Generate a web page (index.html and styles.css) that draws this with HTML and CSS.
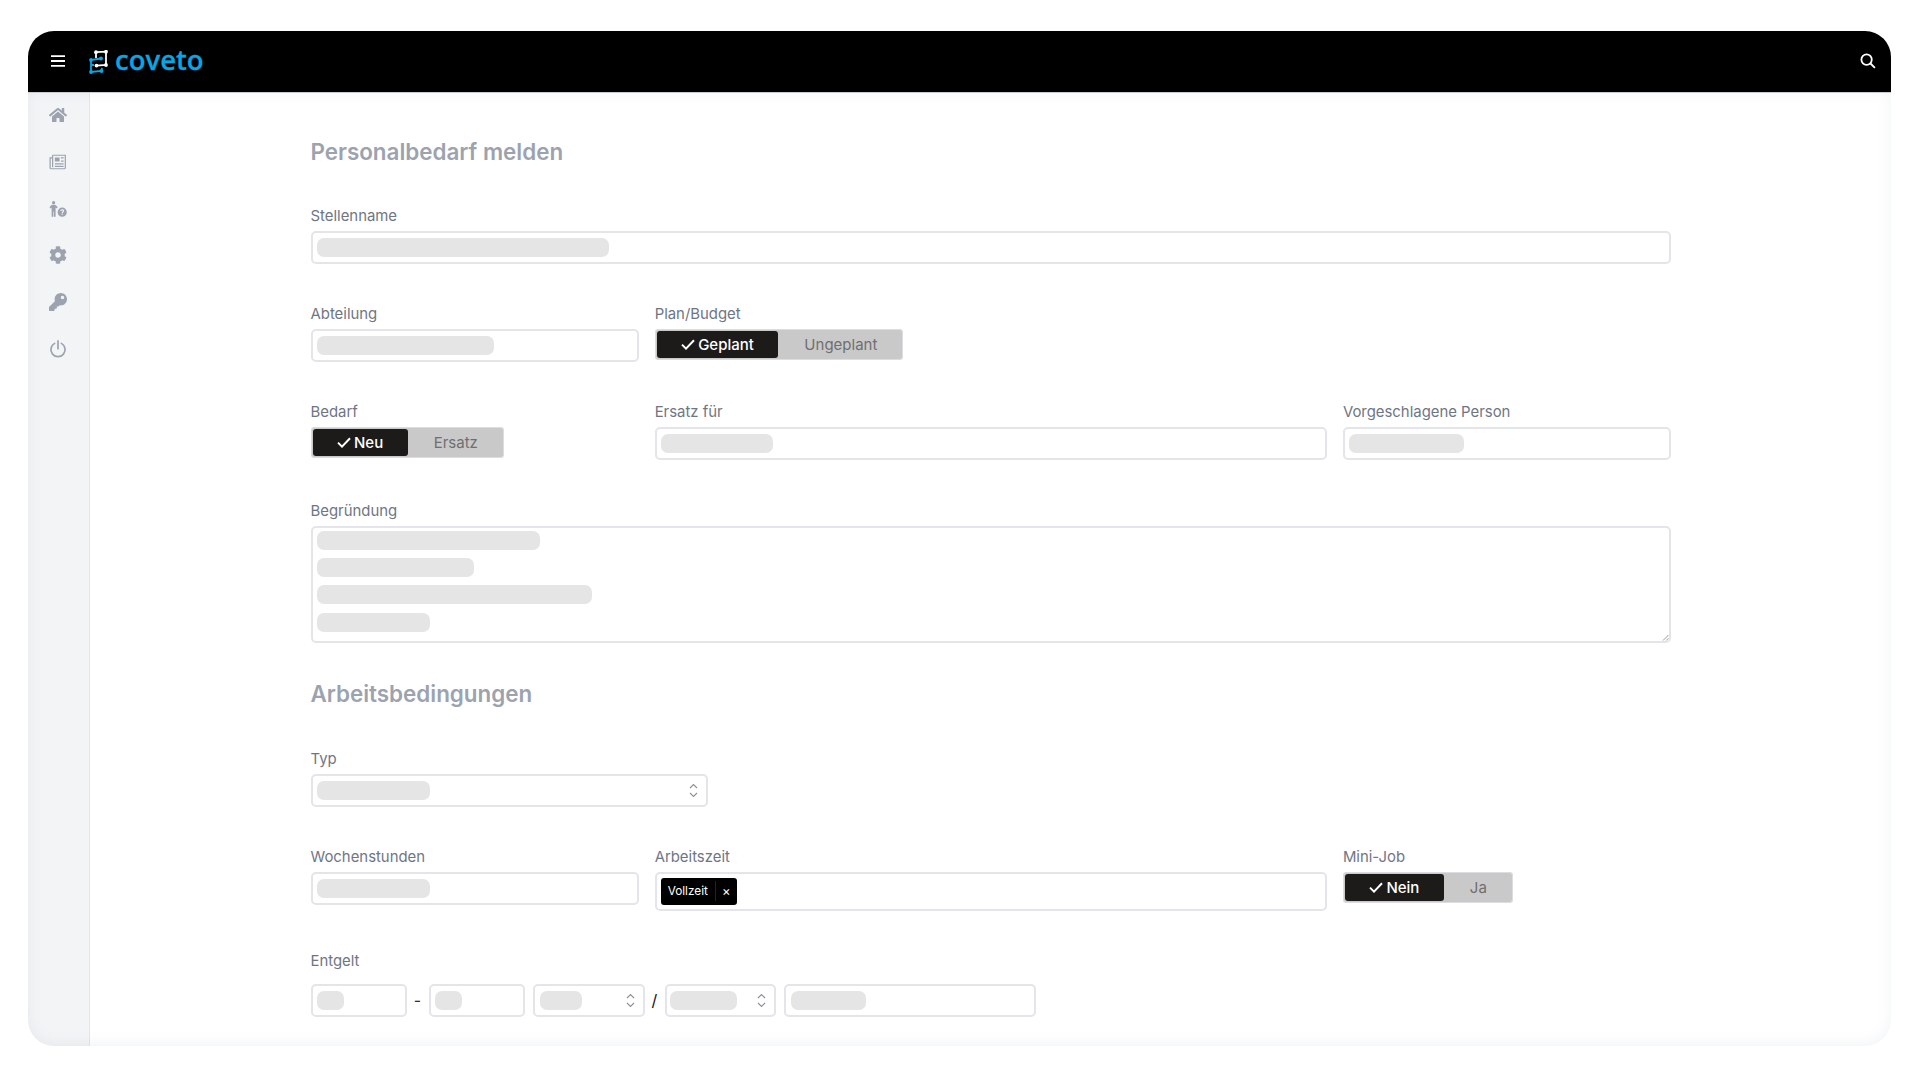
FILE: index.html
```html
<!DOCTYPE html>
<html lang="de">
<head>
    <meta charset="UTF-8">
    <meta name="viewport" content="width=device-width, initial-scale=1.0">
    <title>Personalbedarf melden</title>
    <link rel="stylesheet" href="styles.css">
</head>
<body>

<div class="window">
    <header class="topbar">
        <svg class="bars" viewBox="0 0 14 12"><path d="M0 1.2h14M0 6h14M0 10.8h14"/></svg>
        <div class="brand">
            <svg class="brand-icon" viewBox="0 0 21 24">
                <g class="brand-white">
                    <path d="M7 2.2L17 1.6V15L7.5 15.6M7 2.2V8"/>
                    <circle cx="7" cy="2.2" r="1.9"/><circle cx="17" cy="1.8" r="1.9"/><circle cx="17" cy="15" r="1.9"/><circle cx="7.5" cy="15.6" r="1.9"/>
                </g>
                <g class="brand-blue">
                    <path d="M12 8.5L2 10V22L12.5 21L13 18M2 15h3"/>
                    <circle cx="12" cy="8.5" r="1.9"/><circle cx="2" cy="10" r="1.9"/><circle cx="2" cy="22" r="1.9"/><circle cx="12.5" cy="21" r="1.9"/>
                </g>
            </svg>
            <span class="brand-name">coveto</span>
        </div>
        <svg class="search" viewBox="0 0 16 16"><circle cx="6.6" cy="6.6" r="5.2"/><path d="M10.5 10.5l4.4 4.4"/></svg>
    </header>

    <div class="layout">
        <nav class="sidebar">
            <svg class="nav-icon" viewBox="0 0 576 512"><path d="M280.37 148.26L96 300.11V464a16 16 0 0 0 16 16l112.06-.29a16 16 0 0 0 15.92-16V368a16 16 0 0 1 16-16h64a16 16 0 0 1 16 16v95.64a16 16 0 0 0 16 16.05L464 480a16 16 0 0 0 16-16V300L295.67 148.26a12.19 12.19 0 0 0-15.3 0zM571.6 251.47L488 182.56V44.05a12 12 0 0 0-12-12h-56a12 12 0 0 0-12 12v72.61L318.47 43a48 48 0 0 0-61 0L4.34 251.47a12 12 0 0 0-1.6 16.9l25.5 31A12 12 0 0 0 45.15 301l235.22-193.74a12.19 12.19 0 0 1 15.3 0L530.9 301a12 12 0 0 0 16.9-1.6l25.5-31a12 12 0 0 0-1.7-16.93z"/></svg>
            <svg class="nav-icon nav-line" viewBox="0 0 16 14"><path d="M3.2 1h11.3v11c0 .6-.4 1-1 1H2c-.6 0-1-.4-1-1V3.4h2.2M3.2 1v10.6"/><path class="fill" d="M5.2 3h4.2v3.6H5.2z"/><path d="M10.6 3.4h2.4M10.6 6.2h2.4M5.2 8.6H13M5.2 10.8H13"/></svg>
            <svg class="nav-icon" viewBox="0 0 18 16"><circle cx="4.6" cy="1.7" r="1.6"/><path d="M4.6 3.8c1.5 0 2 .2 2.6.8l1.5 1.7-1.1 1.1-1-1V15.8H4.9v-5H4.3v5H2.6V6.4l-1 1L.5 6.3 2 4.6c.6-.6 1-.8 2.6-.8z"/><path fill-rule="evenodd" d="M13.2 6.6a4.6 4.6 0 1 1 0 9.2 4.6 4.6 0 0 1 0-9.2zm-1.9 3.5h1.2c0-.5.3-.8.7-.8.4 0 .7.2.7.6 0 .7-1.2.8-1.2 2.1h1.2c0-.9 1.3-1 1.3-2.2 0-1-.9-1.6-2-1.6-1.2 0-1.9.8-1.9 1.9zm1.3 2.4v1.2h1.2v-1.2z"/></svg>
            <svg class="nav-icon" viewBox="0 0 512 512"><path d="M487.4 315.7l-42.6-24.6c4.3-23.2 4.3-47 0-70.2l42.6-24.6c4.9-2.8 7.1-8.6 5.5-14-11.1-35.6-30-67.8-54.7-94.6-3.8-4.1-10-5.1-14.8-2.3L380.8 110c-17.9-15.4-38.5-27.3-60.8-35.1V25.8c0-5.6-3.9-10.5-9.4-11.7-36.7-8.2-74.3-7.8-109.2 0-5.5 1.2-9.4 6.1-9.4 11.7V75c-22.2 7.9-42.8 19.8-60.8 35.1L88.7 85.5c-4.9-2.8-11-1.9-14.8 2.3-24.7 26.7-43.6 58.9-54.7 94.6-1.7 5.4.6 11.2 5.5 14L67.3 221c-4.3 23.2-4.3 47 0 70.2l-42.6 24.6c-4.9 2.8-7.1 8.6-5.5 14 11.1 35.6 30 67.8 54.7 94.6 3.8 4.1 10 5.1 14.8 2.3l42.6-24.6c17.9 15.4 38.5 27.3 60.8 35.1v49.2c0 5.6 3.9 10.5 9.4 11.7 36.7 8.2 74.3 7.8 109.2 0 5.5-1.2 9.4-6.1 9.4-11.7v-49.2c22.2-7.9 42.8-19.8 60.8-35.1l42.6 24.6c4.9 2.8 11 1.9 14.8-2.3 24.7-26.7 43.6-58.9 54.7-94.6 1.5-5.5-.7-11.3-5.6-14.1zM256 336c-44.1 0-80-35.9-80-80s35.9-80 80-80 80 35.9 80 80-35.9 80-80 80z"/></svg>
            <svg class="nav-icon" viewBox="0 0 512 512"><path d="M512 176.001C512 273.203 433.202 352 336 352c-11.22 0-22.19-1.062-32.827-3.069l-24.012 27.014A23.999 23.999 0 0 1 261.223 384H224v40c0 13.255-10.745 24-24 24h-40v40c0 13.255-10.745 24-24 24H24c-13.255 0-24-10.745-24-24v-78.059c0-6.365 2.529-12.47 7.029-16.971l161.802-161.802C163.108 213.814 160 195.271 160 176 160 78.798 238.797.001 335.999 0 433.488-.001 512 78.511 512 176.001zM336 128c0 26.51 21.49 48 48 48s48-21.49 48-48-21.49-48-48-48-48 21.49-48 48z"/></svg>
            <svg class="nav-icon nav-line nav-power" viewBox="0 0 16 16"><path d="M5 3a6.3 6.3 0 1 0 6 0M8 .8v7"/></svg>
        </nav>

        <main class="content">
            <h2 class="title">Personalbedarf melden</h2>

            <div class="grid">
                <div class="field span-12">
                    <label>Stellenname</label>
                    <div class="input"><span class="skel s-292"></span></div>
                </div>

                <div class="field span-3">
                    <label>Abteilung</label>
                    <div class="input"><span class="skel s-177"></span></div>
                </div>
                <div class="field span-9">
                    <label>Plan/Budget</label>
                    <div class="toggle">
                        <span class="opt on"><svg class="check" viewBox="0 0 14 11"><path d="M1 5.6l4 4L13 1.2"/></svg>Geplant</span>
                        <span class="opt">Ungeplant</span>
                    </div>
                </div>

                <div class="field span-3">
                    <label>Bedarf</label>
                    <div class="toggle">
                        <span class="opt on"><svg class="check" viewBox="0 0 14 11"><path d="M1 5.6l4 4L13 1.2"/></svg>Neu</span>
                        <span class="opt">Ersatz</span>
                    </div>
                </div>
                <div class="field span-6">
                    <label>Ersatz für</label>
                    <div class="input"><span class="skel s-112"></span></div>
                </div>
                <div class="field span-3">
                    <label>Vorgeschlagene Person</label>
                    <div class="input"><span class="skel s-115"></span></div>
                </div>

                <div class="field span-12">
                    <label>Begründung</label>
                    <div class="input textarea">
                        <span class="skel s-223"></span>
                        <span class="skel s-157"></span>
                        <span class="skel s-275"></span>
                        <span class="skel s-113"></span>
                        <svg class="grip" viewBox="0 0 7 7"><path d="M6.5 1L1 6.5M6.5 4.2L4.2 6.5"/></svg>
                    </div>
                </div>
            </div>

            <h2 class="title title-second">Arbeitsbedingungen</h2>

            <div class="grid">
                <div class="field span-12">
                    <label>Typ</label>
                    <div class="input select select-typ">
                        <span class="skel s-113"></span>
                        <svg class="updown" viewBox="0 0 9 15"><path d="M1 5l3.5-3.5L8 5M1 10l3.5 3.5L8 10"/></svg>
                    </div>
                </div>

                <div class="field span-3">
                    <label>Wochenstunden</label>
                    <div class="input"><span class="skel s-113"></span></div>
                </div>
                <div class="field span-6">
                    <label>Arbeitszeit</label>
                    <div class="input multi">
                        <span class="tag"><span class="tag-text">Vollzeit</span><span class="tag-x">×</span></span>
                    </div>
                </div>
                <div class="field span-3">
                    <label>Mini-Job</label>
                    <div class="toggle">
                        <span class="opt on"><svg class="check" viewBox="0 0 14 11"><path d="M1 5.6l4 4L13 1.2"/></svg>Nein</span>
                        <span class="opt">Ja</span>
                    </div>
                </div>

                <div class="field span-12 field-pay">
                    <label>Entgelt</label>
                    <div class="pay">
                        <div class="input pay-from"><span class="skel s-27"></span></div>
                        <span class="sep">-</span>
                        <div class="input pay-to"><span class="skel s-27"></span></div>
                        <div class="input select pay-cur">
                            <span class="skel s-42"></span>
                            <svg class="updown" viewBox="0 0 9 15"><path d="M1 5l3.5-3.5L8 5M1 10l3.5 3.5L8 10"/></svg>
                        </div>
                        <span class="sep sep-slash">/</span>
                        <div class="input select pay-per">
                            <span class="skel s-67"></span>
                            <svg class="updown" viewBox="0 0 9 15"><path d="M1 5l3.5-3.5L8 5M1 10l3.5 3.5L8 10"/></svg>
                        </div>
                        <div class="input pay-note"><span class="skel s-73"></span></div>
                    </div>
                </div>
            </div>
        </main>
    </div>
</div>

</body>
</html>
```

FILE: styles.css
```css
* {
    box-sizing: border-box;
}
html, body {
    height: 100%;
}
body {
    margin: 0;
    padding: 31px 29px 34px 28px;
    background: #fff;
    font-family: Inter, "Liberation Sans", sans-serif;
    overflow: hidden;
}

/* window */
.window {
    height: 1015px;
    border-radius: 26px;
    overflow: hidden;
    display: flex;
    flex-direction: column;
    background: #fff;
}
.topbar {
    height: 62px;
    flex: none;
    background: #000;
    border-bottom: 1px solid #c9ccd1;
    display: flex;
    align-items: center;
    padding: 0 15px 1px 23px;
}
.bars {
    width: 14px;
    height: 12px;
    stroke: #fff;
    stroke-width: 1.8;
    fill: none;
}
.brand {
    display: flex;
    align-items: center;
    margin-left: 24px;
}
.brand-icon {
    width: 21px;
    height: 24px;
    fill: none;
    stroke-width: 1.8;
    margin-top: 2px;
}
.brand-white {
    stroke: #fff;
}
.brand-white circle {
    fill: #fff;
    stroke: none;
}
.brand-blue {
    stroke: #0ba5e3;
}
.brand-blue circle {
    fill: #0ba5e3;
    stroke: none;
}
.brand-name {
    color: #0ba5e3;
    font-family: "Open Sans", sans-serif;
    font-weight: 600;
    font-size: 27.5px;
    line-height: 30px;
    margin: -3px 0 0 5px;
    -webkit-text-stroke: 0.3px #0ba5e3;
}
.search {
    width: 16px;
    height: 16px;
    margin-left: auto;
    fill: none;
    stroke: #fff;
    stroke-width: 1.8;
}

.layout {
    flex: 1;
    display: flex;
    min-height: 0;
    position: relative;
}
.layout::after {
    content: "";
    position: absolute;
    inset: 0;
    box-shadow: inset 0 -2px 14px rgba(120, 135, 155, 0.1);
    border-radius: 0 0 26px 26px;
    pointer-events: none;
}
.sidebar {
    width: 62px;
    flex: none;
    background: #f3f4f6;
    border-right: 1px solid #e3e5ea;
    padding: 13px 2px 0 0;
    display: flex;
    flex-direction: column;
    align-items: center;
    gap: 28.8px;
}
.nav-icon {
    width: 18px;
    height: 18px;
    fill: #9ca3af;
}
.nav-line {
    fill: none;
    stroke: #9ca3af;
    stroke-width: 1.1;
}
.nav-line .fill {
    fill: #9ca3af;
    stroke: none;
}
.nav-power {
    stroke-width: 1.5;
    stroke-linecap: round;
}

/* form */
.content {
    flex: 1;
    padding: 44px 220px 0 220.5px;
}
.title {
    margin: 0;
    font-size: 22.4px;
    line-height: 30px;
    font-weight: 600;
    color: #9ca3af;
}
.title-second {
    margin: 36px 0 40px;
}
.grid {
    display: grid;
    grid-template-columns: repeat(12, 1fr);
    column-gap: 16px;
    row-gap: 40.4px;
    margin-top: 38.5px;
}
.title-second + .grid {
    margin-top: 0;
    row-gap: 40px;
}
.span-12 { grid-column: span 12; }
.span-9 { grid-column: span 9; }
.span-6 { grid-column: span 6; }
.span-3 { grid-column: span 3; }

label {
    display: block;
    font-size: 14.9px;
    line-height: 20px;
    height: 20px;
    margin-bottom: 5px;
    color: #6f7683;
}
.field-pay label {
    margin-bottom: 13px;
}
.input {
    height: 33px;
    border: 2px solid #e3e5eb;
    border-radius: 5px;
    background: #fff;
    padding: 5px 4px;
    display: flex;
    align-items: center;
}
.skel {
    display: block;
    height: 19px;
    border-radius: 7px;
    background: #e5e5e5;
    flex: none;
}
.s-292 { width: 292px; }
.s-177 { width: 177px; }
.s-112 { width: 112px; }
.s-115 { width: 115px; }
.s-223 { width: 223px; }
.s-157 { width: 157px; }
.s-275 { width: 275px; }
.s-113 { width: 113px; }
.s-27 { width: 27px; }
.s-42 { width: 42px; }
.s-67 { width: 67px; }
.s-73 { width: 75px; }

.textarea {
    height: 117px;
    flex-direction: column;
    align-items: flex-start;
    gap: 8.3px;
    padding-top: 3px;
    position: relative;
}
.grip {
    position: absolute;
    right: 0;
    bottom: 0;
    width: 7px;
    height: 7px;
    fill: none;
    stroke: #9a9a9a;
    stroke-width: 1;
}
.select {
    justify-content: space-between;
    padding-right: 8px;
}
.select-typ {
    width: 397px;
}
.updown {
    width: 9px;
    height: 15px;
    flex: none;
    fill: none;
    stroke: #8a909a;
    stroke-width: 1.1;
}
.multi {
    height: 39px;
    padding: 4px;
}
.tag {
    display: inline-flex;
    align-items: center;
    height: 27px;
    background: #000;
    color: #fff;
    border-radius: 3px;
    font-size: 11.8px;
    font-weight: 400;
}
.tag-text {
    padding: 0 7px;
    border-right: 1px solid #222;
    line-height: 20px;
}
.tag-x {
    padding: 0 6px;
    font-size: 13px;
}

/* toggle */
.toggle {
    display: inline-flex;
    height: 31px;
    padding: 2px 0 2px 2px;
    background: #c9c9c9;
    border-radius: 4px;
    box-shadow: 0 0 0 1px #dcdde0 inset;
}
.opt {
    display: flex;
    align-items: center;
    padding: 0 26px;
    font-size: 15px;
    color: #6f6f6f;
}
.opt.on {
    background: #1c1b1a;
    color: #fff;
    font-weight: 500;
    border-radius: 3px;
    padding: 0 24.5px;
}
.check {
    width: 14px;
    height: 11px;
    margin-right: 3px;
    fill: none;
    stroke: #fff;
    stroke-width: 2;
}

/* entgelt row */
.pay {
    display: flex;
    align-items: center;
}
.pay .input {
    flex: none;
}
.pay-from { width: 96px; }
.pay-to { width: 96px; margin-right: 8px; }
.pay-cur { width: 112px; padding-left: 5px; }
.pay-per { width: 111px; margin-right: 8px; padding-left: 3px; }
.pay-note { width: 252px; padding-left: 5px; }
.sep {
    width: 22px;
    text-align: center;
    color: #333;
    font-size: 16px;
}
.sep-slash {
    width: 20px;
    color: #111;
}
```
